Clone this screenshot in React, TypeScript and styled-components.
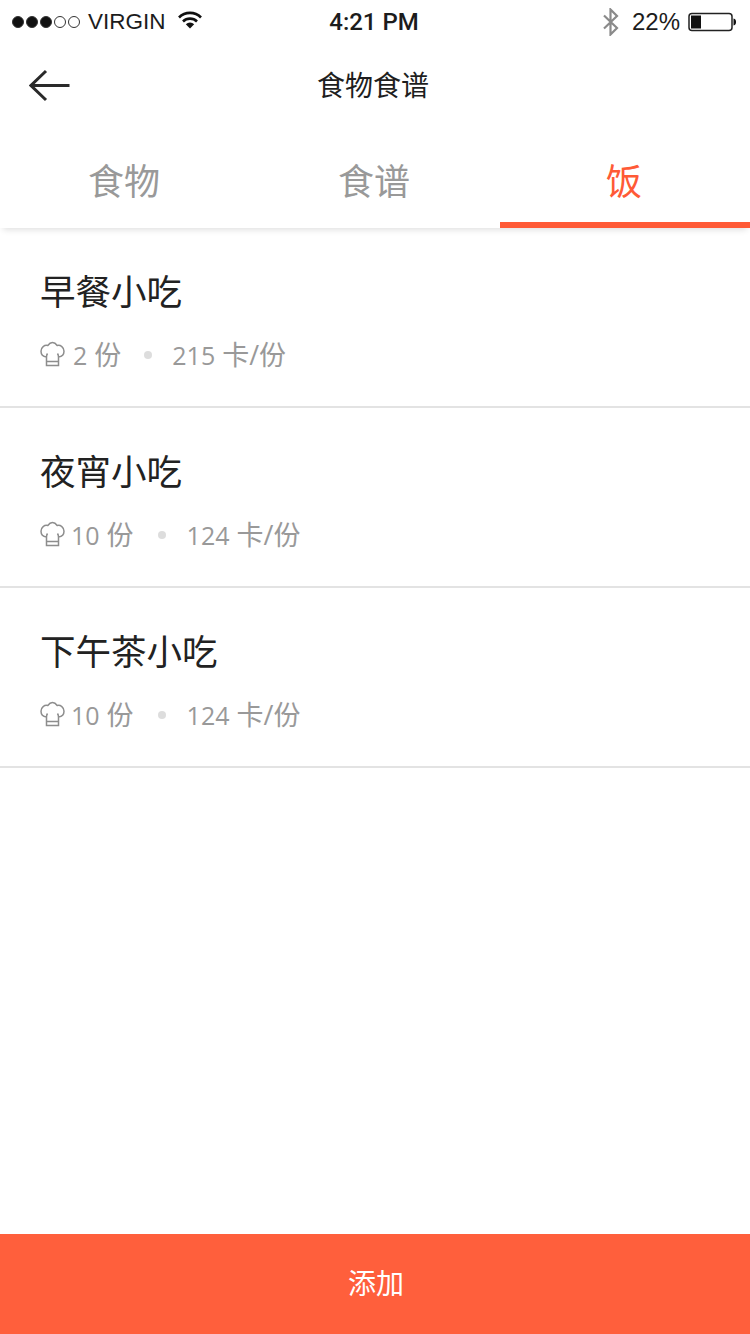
import styled, { createGlobalStyle } from 'styled-components'

const GlobalStyle = createGlobalStyle`
  * {
    box-sizing: border-box;
  }

  html,
  body {
    background: #fff;
    margin: 0;
    padding: 0;
  }
`

const cjk = `"Open Sans", "Noto Sans CJK SC", sans-serif`

const Page = styled.div`
  background: #fff;
  display: flex;
  flex-direction: column;
  font-family: ${cjk};
  height: 1334px;
  overflow: hidden;
  width: 750px;
`

const StatusBar = styled.div`
  align-items: center;
  color: #1c1c1c;
  display: grid;
  font-family: "Liberation Sans", Arial, sans-serif;
  font-size: 22.5px;
  grid-template-columns: 1fr auto 1fr;
  height: 44px;
  padding: 0 14px 1px 12px;
`

const StatusSide = styled.div<{ $end?: boolean }>`
  align-items: center;
  display: flex;
  justify-content: ${(p) => (p.$end ? 'flex-end' : 'flex-start')};
`

const Signal = styled.span`
  display: flex;
  gap: 2px;
  margin-right: 8px;
`

const Dot = styled.i<{ $on?: boolean }>`
  background: ${(p) => (p.$on ? '#111' : 'transparent')};
  border: 1px solid #333;
  border-radius: 50%;
  display: block;
  height: 12px;
  width: 12px;
`

const WifiIcon = styled.svg`
  margin-left: 12px;
  margin-top: -3px;
`

const Clock = styled.div`
  font-family: Roboto, "Liberation Sans", sans-serif;
  font-size: 24px;
  font-weight: 500;
`

const Percent = styled.span`
  font-size: 24px;
  margin: 0 8px 0 12px;
`

const NavBar = styled.header`
  align-items: center;
  display: flex;
  height: 84px;
  justify-content: center;
  padding: 0 4px 4px 0;
  position: relative;
`

const BackIcon = styled.svg`
  left: 29px;
  position: absolute;
  top: 25px;
`

const NavTitle = styled.h1`
  color: #1e1e1e;
  font-size: 28px;
  font-weight: 400;
  margin: 0;
`

const Tabs = styled.nav`
  box-shadow: 0 5px 6px -3px rgba(0, 0, 0, 0.12);
  display: grid;
  grid-template-columns: repeat(3, 1fr);
  height: 100px;
  position: relative;
`

const Tab = styled.div<{ $active?: boolean }>`
  align-items: center;
  border-bottom: 6px solid ${(p) => (p.$active ? '#ff5a36' : 'transparent')};
  color: ${(p) => (p.$active ? '#ff5a36' : '#999')};
  display: flex;
  font-size: 36px;
  justify-content: center;
  padding: 9px 2px 0 0;
`

const List = styled.main`
  display: flex;
  flex: 1;
  flex-direction: column;
`

const Row = styled.article`
  border-bottom: 2px solid #e3e3e3;
  display: flex;
  flex-direction: column;
  height: 180px;
  padding: 40px 0 0 40px;
`

const RowTitle = styled.h2`
  color: #222;
  font-size: 35.5px;
  font-weight: 400;
  line-height: 46px;
  margin: 0;
`

const Meta = styled.div`
  align-items: center;
  color: #999;
  display: flex;
  font-size: 27px;
  line-height: 36px;
  margin-top: 23px;
`

const HatIcon = styled.svg`
  flex: none;
  margin-top: -2px;
`

const Servings = styled.span<{ $wide?: boolean }>`
  margin-left: ${(p) => (p.$wide ? '6px' : '8px')};
`

const Count = styled.span`
  font-size: 25px;
`

const Separator = styled.i<{ $wide?: boolean }>`
  background: #ddd;
  border-radius: 50%;
  height: 8px;
  margin: 0 ${(p) => (p.$wide ? '21px' : '20px')} 0 ${(p) => (p.$wide ? '24px' : '23px')};
  width: 8px;
`

const AddButton = styled.button`
  background: #ff5f3c;
  border: 0;
  color: #fff;
  font-family: ${cjk};
  font-size: 28px;
  height: 100px;
  padding: 0 0 4px 2px;
  width: 100%;
`

const meals = [
  { name: '早餐小吃', servings: 2, calories: 215 },
  { name: '夜宵小吃', servings: 10, calories: 124 },
  { name: '下午茶小吃', servings: 10, calories: 124 }
]

export default function App() {
  return (
    <Page>
      <GlobalStyle />
      <StatusBar>
        <StatusSide>
          <Signal>
            <Dot $on />
            <Dot $on />
            <Dot $on />
            <Dot />
            <Dot />
          </Signal>
          VIRGIN
          <WifiIcon width="24" height="18" viewBox="0 0 24 18">
            <path d="M1 6.500a15.500 15.500 0 0 1 22 0" fill="none" stroke="#111" strokeWidth="2.6" />
            <path d="M5 10.500a10 10 0 0 1 14 0" fill="none" stroke="#111" strokeWidth="2.6" />
            <path d="M7.800 13.200a6 6 0 0 1 8.400 0L12 17.500z" fill="#111" />
          </WifiIcon>
        </StatusSide>
        <Clock>4:21 PM</Clock>
        <StatusSide $end>
          <svg width="18" height="28" viewBox="0 0 18 28">
            <path d="M2 7.500 15 20l-6.500 6.500v-25L15 8 2 20.500" fill="none" stroke="#8a8a8a" strokeWidth="2.200" />
          </svg>
          <Percent>22%</Percent>
          <svg width="48" height="20" viewBox="0 0 48 20">
            <rect x="1" y="1.500" width="43" height="17" rx="3" fill="none" stroke="#222" strokeWidth="1.500" />
            <rect x="3" y="3.500" width="10" height="13" fill="#111" />
            <path d="M45.500 6.500c2 .5 2.500 1.500 2.500 3.500s-.5 3-2.500 3.500z" fill="#111" />
          </svg>
        </StatusSide>
      </StatusBar>
      <NavBar>
        <BackIcon width="42" height="34" viewBox="0 0 42 34">
          <path d="M40.500 16.500H3M17 2 2 16.500 17 31" fill="none" stroke="#2a2a2a" strokeWidth="3" />
        </BackIcon>
        <NavTitle>食物食谱</NavTitle>
      </NavBar>
      <Tabs>
        <Tab>食物</Tab>
        <Tab>食谱</Tab>
        <Tab $active>饭</Tab>
      </Tabs>
      <List>
        {meals.map((meal) => (
          <Row key={meal.name}>
            <RowTitle>{meal.name}</RowTitle>
            <Meta>
              <HatIcon width="25" height="26" viewBox="0 0 25 26">
                <path
                  d="M6.500 24.500h12V16c3-.5 5.500-2.500 5.500-5.800 0-4-3.500-6.500-6.800-5.700C15.800 2.500 14.500 1.500 12.500 1.500S9.200 2.500 7.800 4.500C4.500 3.700 1 6.200 1 10.200 1 13.500 3.500 15.500 6.500 16zM6.500 20.500h12M6.500 16c0-1.500.3-2.500 1-3.500M18.500 16c0-1.500-.3-2.500-1-3.500"
                  fill="none"
                  stroke="#8d8d8d"
                  strokeWidth="1.500"
                />
              </HatIcon>
              <Servings $wide={meal.servings > 9}>
                <Count>{meal.servings}</Count> 份
              </Servings>
              <Separator $wide={meal.servings > 9} />
              <span>
                <Count>{meal.calories}</Count> 卡/份
              </span>
            </Meta>
          </Row>
        ))}
      </List>
      <AddButton type="button">添加</AddButton>
    </Page>
  )
}
